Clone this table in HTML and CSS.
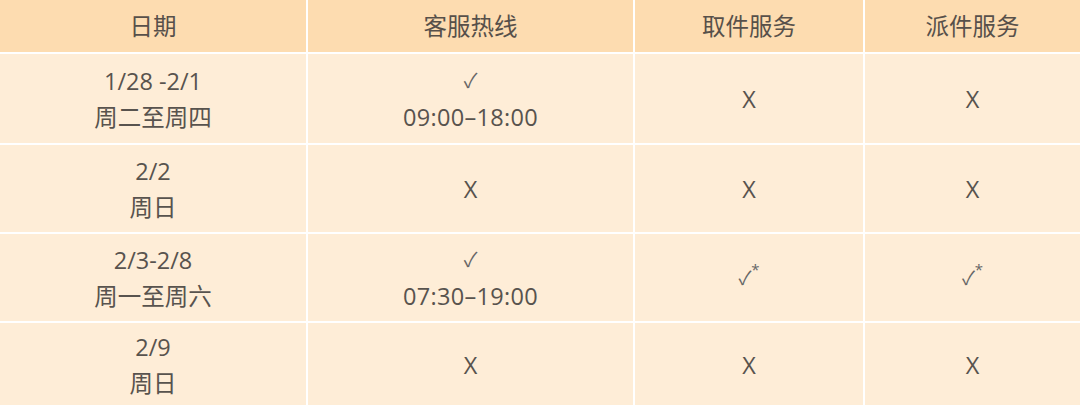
FILE: index.html
```html
<!DOCTYPE html>
<html lang="zh-CN">
<head>
<meta charset="utf-8">
<link rel="stylesheet" href="styles.css">
</head>
<body>
<div class="table">
  <div class="th">日期</div>
  <div class="th">客服热线</div>
  <div class="th">取件服务</div>
  <div class="th">派件服务</div>

  <div class="td"><span>1/28 -2/1</span><span>周二至周四</span></div>
  <div class="td"><span class="ck">✓</span><span class="num">09:00–18:00</span></div>
  <div class="td">X</div>
  <div class="td">X</div>

  <div class="td"><span>2/2</span><span>周日</span></div>
  <div class="td">X</div>
  <div class="td">X</div>
  <div class="td">X</div>

  <div class="td"><span>2/3-2/8</span><span>周一至周六</span></div>
  <div class="td"><span class="ck">✓</span><span class="num">07:30–19:00</span></div>
  <div class="td"><span class="ck sm">✓<sup>*</sup></span></div>
  <div class="td"><span class="ck sm">✓<sup>*</sup></span></div>

  <div class="td"><span>2/9</span><span>周日</span></div>
  <div class="td">X</div>
  <div class="td">X</div>
  <div class="td">X</div>
</div>
</body>
</html>
```
FILE: styles.css
```css
html, body {
  margin: 0;
  padding: 0;
  background: #ffffff;
}
body {
  width: 1080px;
  height: 405px;
  overflow: hidden;
  font-family: "Open Sans", "Noto Sans CJK SC", sans-serif;
  color: #58534e;
}
.table {
  display: grid;
  grid-template-columns: 306px 325px 228px 215px;
  grid-template-rows: 52px 89px 87px 87px 84px;
  column-gap: 2px;
  row-gap: 2px;
  background: #ffffff;
  width: 1080px;
}
.th, .td {
  display: flex;
  flex-direction: column;
  align-items: center;
  justify-content: center;
  font-size: 23.5px;
  line-height: 36px;
}
.th {
  background: #fddcb0;
  color: #57504a;
}
.td {
  background: #feedd7;
}
.num {
  letter-spacing: 0.3px;
}
.ck {
  font-size: 20px;
  color: #666;
}
.ck.sm {
  font-size: 19px;
}
.ck sup {
  font-size: 15px;
  position: relative;
  top: -1px;
  vertical-align: top;
  line-height: 20px;
  margin-left: 0;
}
```
